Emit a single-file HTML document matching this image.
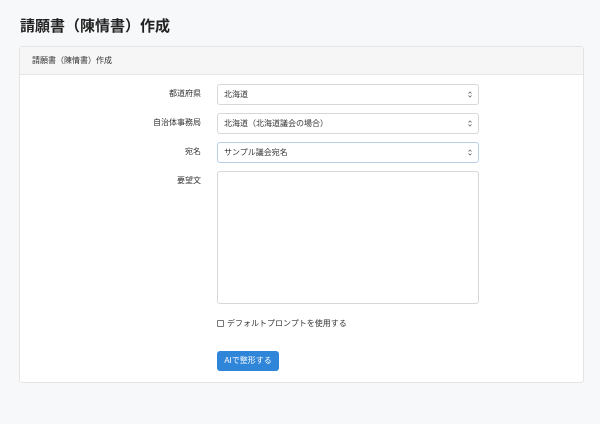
<!DOCTYPE html>
<html><head><meta charset="utf-8"><style>
body{margin:0;background:#f7f8fa;font-family:"Liberation Sans","Noto Sans CJK JP",sans-serif;color:#333;width:600px;height:424px;position:relative;overflow:hidden}
.abs{position:absolute}
h1{position:absolute;left:20px;top:15px;margin:0;font-size:15px;font-weight:bold;color:#222;line-height:24px}
.card{left:19px;top:46px;width:563px;height:335px;background:#fff;border:1px solid #e4e4e4;border-radius:3px}
.hdr{left:0;top:0;width:563px;height:27px;background:#f6f6f6;border-bottom:1px solid #e6e6e6;font-size:8px;line-height:27px;text-indent:12px;color:#333}
.lbl{font-size:8px;width:120px;text-align:right;left:61px;line-height:20px}
.sel{left:197px;width:260px;height:19px;border:1px solid #d8d8d8;border-radius:3px;font-size:8px;line-height:19px;text-indent:6px;background:#fff}
.arr{position:absolute;right:6px;top:6px;width:4px;height:7px}
.ta{left:197px;top:124px;width:260px;height:131px;border:1px solid #d8d8d8;border-radius:3px}
.btn{left:197px;top:304px;width:62px;height:20px;background:#2f86d8;border-radius:3px;color:#fff;font-size:8px;line-height:20px;text-align:center}
</style></head><body>
<h1>請願書（陳情書）作成</h1>
<div class="abs card">
<div class="abs hdr">請願書（陳情書）作成</div>
<div class="abs lbl" style="top:37px">都道府県</div>
<div class="abs sel" style="top:37px">北海道<svg class="arr" viewBox="0 0 4 7"><path d="M0.5 2.5L2 1L3.5 2.5M0.5 4.5L2 6L3.5 4.5" fill="none" stroke="#666" stroke-width="0.8"/></svg></div>
<div class="abs lbl" style="top:66px">自治体事務局</div>
<div class="abs sel" style="top:66px">北海道（北海道議会の場合）<svg class="arr" viewBox="0 0 4 7"><path d="M0.5 2.5L2 1L3.5 2.5M0.5 4.5L2 6L3.5 4.5" fill="none" stroke="#666" stroke-width="0.8"/></svg></div>
<div class="abs lbl" style="top:95px">宛名</div>
<div class="abs sel" style="top:95px;border-color:#b9cfe8">サンプル議会宛名<svg class="arr" viewBox="0 0 4 7"><path d="M0.5 2.5L2 1L3.5 2.5M0.5 4.5L2 6L3.5 4.5" fill="none" stroke="#666" stroke-width="0.8"/></svg></div>
<div class="abs lbl" style="top:124px">要望文</div>
<div class="abs ta"></div>
<div class="abs" style="left:197px;top:272px;font-size:8px;line-height:10px"><span style="display:inline-block;width:5px;height:5px;border:1px solid #777;border-radius:1px;margin-right:3px;vertical-align:middle"></span>デフォルトプロンプトを使用する</div>
<div class="abs btn">AIで整形する</div>
</div>
</body></html>
